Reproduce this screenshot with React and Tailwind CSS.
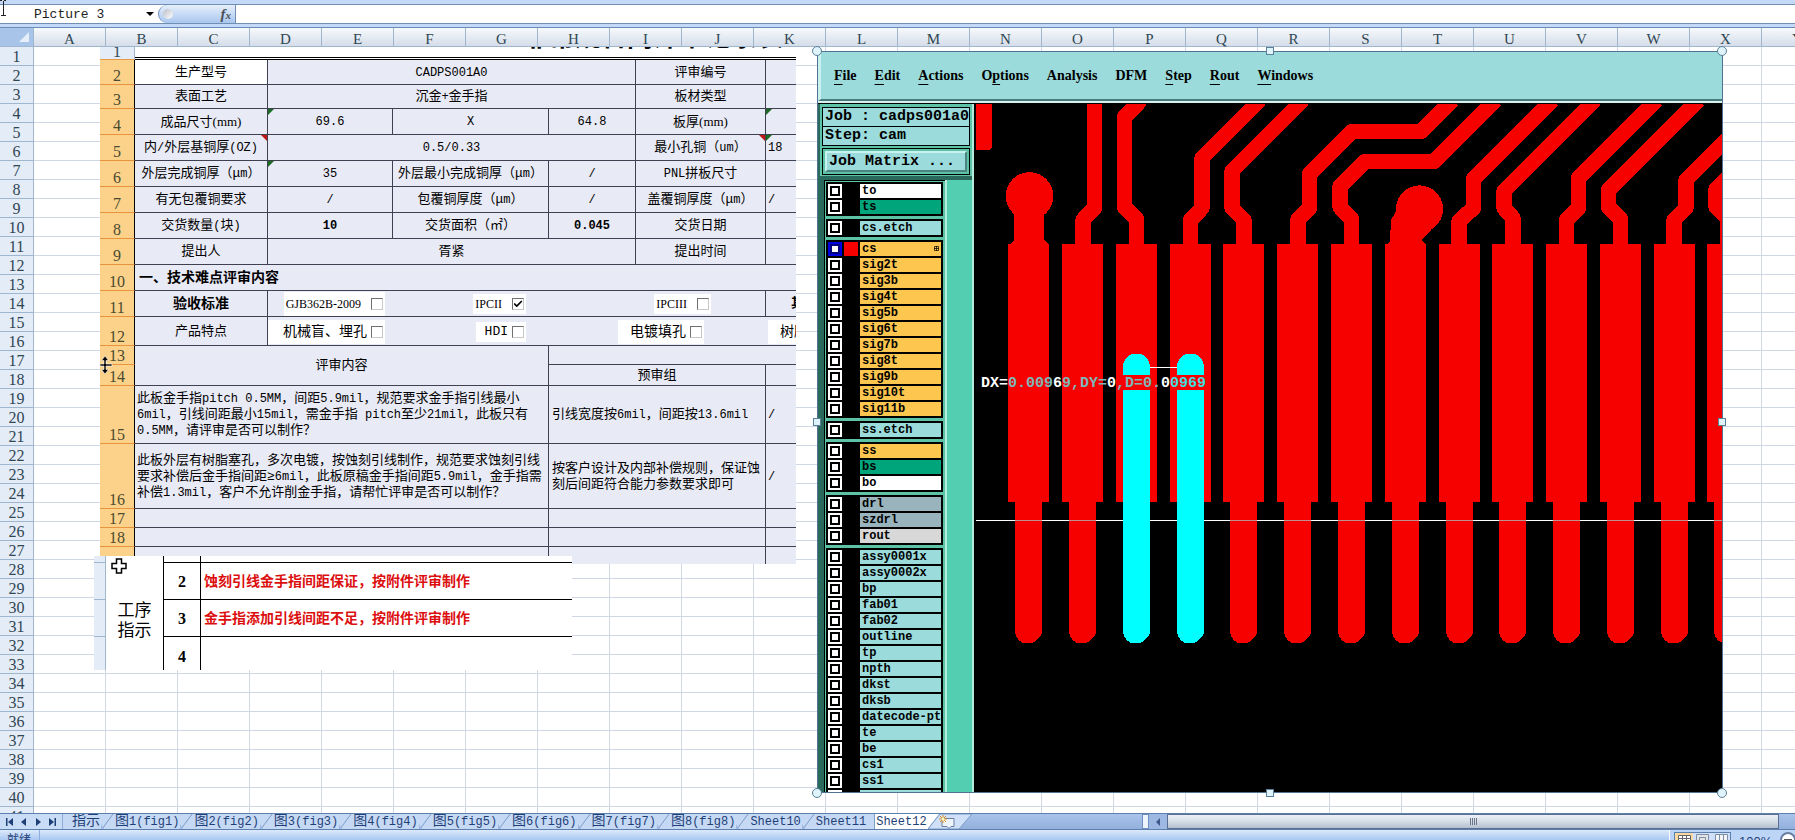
import { useState } from "react";
import clsx from "clsx";
import { Check } from "lucide-react";

const COLUMNS = "ABCDEFGHIJKLMNOPQRSTUVWXYZ".split("");
const ROWS = Array.from({ length: 41 }, (_, i) => i + 1);
const SHEETS = [
  "指示", "图1(fig1)", "图2(fig2)", "图3(fig3)", "图4(fig4)", "图5(fig5)",
  "图6(fig6)", "图7(fig7)", "图8(fig8)", "Sheet10", "Sheet11", "Sheet12",
];

const MONO = "font-['Liberation_Mono','Noto_Sans_CJK_SC',monospace]";
const SERIF = "font-['Liberation_Serif','Noto_Sans_CJK_SC',serif]";

// Chinese glyphs keep the parent's size, the Latin runs are set half-width
function Song({ children }) {
  return children.split(/([\x20-\x7e]+)/).map((part, i) =>
    i % 2 ? <span key={i} className="text-[12px]">{part}</span> : part
  );
}

/* ---------- formula bar ---------- */

function FormulaBar() {
  return (
    <div className="relative shrink-0 h-[27px] bg-[#c3d9f7] pt-1">
      <div className="flex h-5 bg-white border-y border-[#6f8fb5]">
        <div className="flex w-[158px] items-center justify-between pl-[34px] pr-1">
          <input
            aria-label="Name box"
            defaultValue="Picture 3"
            className={clsx(MONO, "w-24 pt-0.5 text-[13px] leading-4 text-[#222] outline-none bg-transparent")}
          />
          <button aria-label="Open name list" className="border-x-4 border-t-4 border-x-transparent border-t-black" />
        </div>
        <div className="flex w-[78px] items-center justify-between rounded-l-full border-l border-r border-[#6f8fb5] bg-linear-to-b from-[#e6effb] to-[#a9c6ee] pl-1 pr-1">
          <span className="size-2.5 rounded-full bg-linear-to-br from-[#b9bec6] to-white" />
          <button aria-label="Insert function" className={clsx(SERIF, "text-[15px] leading-4 italic font-bold text-[#4b4f57]")}>
            f<span className="text-[11px]">x</span>
          </button>
        </div>
        <input aria-label="Formula" className="flex-1 outline-none" />
      </div>
      <svg className="absolute left-0 top-0" width="6" height="16" viewBox="0 0 6 16" stroke="#222" fill="none">
        <path d="M0 .5h2M4 .5h2M3.500 1v14M1 15.500h5" />
      </svg>
    </div>
  );
}

/* ---------- sheet grid ---------- */

function SheetGrid() {
  return (
    <table className="border-separate border-spacing-0 border-t border-[#6a8bb8] bg-white">
      <thead>
        <tr>
          <th className="min-w-[34px] h-[19px] p-0 bg-[#a9c4e9] border-r border-b border-[#9eb6ce]">
            <svg className="ml-auto mr-1" width="10" height="10" viewBox="0 0 10 10">
              <path d="M10 0v10H0z" fill="#e6eefa" />
            </svg>
          </th>
          {COLUMNS.map((c) => (
            <th
              key={c}
              className={clsx(
                SERIF,
                "min-w-[72px] h-[19px] p-0 pt-1 text-[15px] leading-[14px] font-normal text-[#2f4653] border-r border-b border-[#9eb6ce] bg-linear-to-b from-[#f7fafc] to-[#d5dde9]"
              )}
            >
              {c}
            </th>
          ))}
        </tr>
      </thead>
      <tbody>
        {ROWS.map((r) => (
          <tr key={r}>
            <th className={clsx(SERIF, "h-[19px] p-0 pt-0.5 text-[16px] leading-4 font-normal text-[#2f4653] bg-[#e4ecf7] border-r border-b border-[#9eb6ce]")}>
              {r}
            </th>
            {COLUMNS.map((c) => (
              <td key={c} className="p-0 border-r border-b border-[#d0d7e5]" />
            ))}
          </tr>
        ))}
      </tbody>
    </table>
  );
}

/* ---------- review form ---------- */

function FormRow({ n, h, children }) {
  return (
    <tr className={h}>
      <th
        className={clsx(
          SERIF,
          "p-0 align-bottom text-[16px] leading-4 font-normal text-[#4a4a30] bg-[#fcd28a] border-r border-r-black border-b border-b-[#e8943c]"
        )}
      >
        {n}
      </th>
      {children}
    </tr>
  );
}

function Cell({ children, span, rows, className, mark }) {
  return (
    <td
      colSpan={span}
      rowSpan={rows}
      className={clsx("relative p-0 pt-px text-center leading-4 whitespace-nowrap border-b border-[#3f4152]", className)}
    >
      {mark === "green" && <i className="absolute left-0 top-0 border-t-6 border-r-6 border-t-[#1b6b22] border-r-transparent" />}
      {mark === "red" && <i className="absolute right-0 top-0 border-t-6 border-l-6 border-t-[#c01818] border-l-transparent" />}
      {typeof children === "string" ? <Song>{children}</Song> : children}
    </td>
  );
}

function Tick({ label, checked, className }) {
  const [on, setOn] = useState(!!checked);
  return (
    <label className={clsx("inline-flex shrink-0 items-center justify-end gap-1 bg-white pr-0.5 leading-4", className)}>
      {label}
      <span className="relative size-3">
        <input
          type="checkbox"
          checked={on}
          onChange={() => setOn(!on)}
          className="block size-3 appearance-none border border-t-[#707070] border-l-[#707070] border-r-[#c8c8c8] border-b-[#c8c8c8] bg-white"
        />
        {on && <Check size={10} strokeWidth={4} className="pointer-events-none absolute left-px top-px" />}
      </span>
    </label>
  );
}

const R = "border-r";

function ReviewForm() {
  return (
    <div className={clsx(MONO, "absolute left-[100px] top-5 w-[696px] h-[517px] overflow-hidden text-[13px] text-black")}>
      <table className="table-fixed w-[726px] border-separate border-spacing-0 bg-[#e8eaf5]">
        <colgroup>
          <col className="w-[35px]" />
          <col className="w-[133px]" />
          <col className="w-[125px]" />
          <col className="w-[156px]" />
          <col className="w-[87px]" />
          <col className="w-[130px]" />
          <col className="w-[60px]" />
        </colgroup>
        <tbody>
          <tr className="h-[13px]">
            <th className={clsx(SERIF, "p-0 bg-[#e4ecf7] border-r border-b border-r-[#9eb6ce] border-b-[#e69b48]")}>
              <div className="flex h-3 flex-col justify-end overflow-hidden text-[16px] leading-[15px] font-normal text-[#2f4653]">1</div>
            </th>
            <td colSpan={6} className="p-0 bg-white border-b-3 border-double border-black">
              <div className="flex h-2.5 flex-col justify-end overflow-hidden pb-1">
                <b className="pl-[388px] text-[26px] leading-7 whitespace-nowrap">非常规合同评审记录表</b>
              </div>
            </td>
          </tr>
          <FormRow n={2} h="h-[25px]">
            <Cell className={clsx(R, "bg-white")}>生产型号</Cell>
            <Cell span={3} className={R}>CADPS001A0</Cell>
            <Cell className={R}>评审编号</Cell>
            <Cell />
          </FormRow>
          <FormRow n={3} h="h-[24px]">
            <Cell className={R}>表面工艺</Cell>
            <Cell span={3} className={R}>沉金+金手指</Cell>
            <Cell className={R}>板材类型</Cell>
            <Cell />
          </FormRow>
          <FormRow n={4} h="h-[26px]">
            <Cell className={R}><>成品尺寸<span className={SERIF}>(mm)</span></></Cell>
            <Cell className={R} mark="green">69.6</Cell>
            <Cell className={R}>X</Cell>
            <Cell className={R}>64.8</Cell>
            <Cell className={R}><>板厚<span className={SERIF}>(mm)</span></></Cell>
            <Cell mark="green" />
          </FormRow>
          <FormRow n={5} h="h-[26px]">
            <Cell className={R} mark="red">内/外层基铜厚(OZ)</Cell>
            <Cell span={3} className={R}>0.5/0.33</Cell>
            <Cell className={R} mark="red">最小孔铜（um）</Cell>
            <Cell className="text-left pl-0.5" mark="green">18</Cell>
          </FormRow>
          <FormRow n={6} h="h-[26px]">
            <Cell className={R}>外层完成铜厚（μm）</Cell>
            <Cell className={R} mark="green">35</Cell>
            <Cell className={R}>外层最小完成铜厚（μm）</Cell>
            <Cell className={R}>/</Cell>
            <Cell className={R}>PNL拼板尺寸</Cell>
            <Cell />
          </FormRow>
          <FormRow n={7} h="h-[26px]">
            <Cell className={R}>有无包覆铜要求</Cell>
            <Cell className={R}>/</Cell>
            <Cell className={R}>包覆铜厚度（μm）</Cell>
            <Cell className={R}>/</Cell>
            <Cell className={R}>盖覆铜厚度（μm）</Cell>
            <Cell className="text-left pl-0.5">/</Cell>
          </FormRow>
          <FormRow n={8} h="h-[26px]">
            <Cell className={R}>交货数量(块)</Cell>
            <Cell className={clsx(R, "font-bold")}>10</Cell>
            <Cell className={R}>交货面积（㎡）</Cell>
            <Cell className={clsx(R, "font-bold")}>0.045</Cell>
            <Cell className={R}>交货日期</Cell>
            <Cell />
          </FormRow>
          <FormRow n={9} h="h-[26px]">
            <Cell className={R}>提出人</Cell>
            <Cell span={3} className={R}>胥紧</Cell>
            <Cell className={R}>提出时间</Cell>
            <Cell />
          </FormRow>
          <FormRow n={10} h="h-[26px]">
            <Cell span={6} className="text-left pl-1 font-bold text-[14px]">一、技术难点评审内容</Cell>
          </FormRow>
          <FormRow n={11} h="h-[26px]">
            <Cell className={clsx(R, "font-bold text-[14px]")}>验收标准</Cell>
            <Cell span={4} className={R}>
              <div className={clsx(SERIF, "flex items-center pl-4 text-[12px]")}>
                <Tick label="GJB362B-2009" className="w-[101px] h-6 gap-2.5" />
                <Tick label="IPCII" className="ml-[88px] w-[53px] h-5 gap-2.5" checked />
                <Tick label="IPCIII" className="ml-[128px] w-[57px] h-5 gap-2.5" />
              </div>
            </Cell>
            <Cell className="text-left pl-[25px] font-bold">其他</Cell>
          </FormRow>
          <FormRow n={12} h="h-[29px]">
            <Cell className={R}>产品特点</Cell>
            <Cell span={5}>
              <div className="flex items-center text-[14px]">
                <Tick label="机械盲、埋孔" className="w-[117px] h-6" />
                <Tick label="HDI" className="ml-[91px] w-[50px] h-5 text-[13px]" />
                <Tick label="电镀填孔" className="ml-[92px] w-[86px] h-6" />
                <Tick label="树脂塞孔" className="ml-16 w-[86px] h-6" />
              </div>
            </Cell>
          </FormRow>
          <FormRow n={13} h="h-[19px]">
            <Cell span={3} rows={2} className={R}>评审内容</Cell>
            <Cell span={3} />
          </FormRow>
          <FormRow n={14} h="h-[21px]">
            <Cell span={2} className={R}>预审组</Cell>
            <Cell />
          </FormRow>
          <FormRow n={15} h="h-[58px]">
            <Cell span={3} className={clsx(R, "text-left pl-0.5")}>
              <>
                <Song>此板金手指pitch 0.5MM，间距5.9mil，规范要求金手指引线最小</Song><br />
                <Song>6mil，引线间距最小15mil，需金手指 pitch至少21mil，此板只有</Song><br />
                <Song>0.5MM，请评审是否可以制作？</Song>
              </>
            </Cell>
            <Cell span={2} className={clsx(R, "text-left pl-[3px]")}>引线宽度按6mil，间距按13.6mil</Cell>
            <Cell className="text-left pl-0.5">/</Cell>
          </FormRow>
          <FormRow n={16} h="h-[65px]">
            <Cell span={3} className={clsx(R, "text-left pl-0.5")}>
              <>
                <Song>此板外层有树脂塞孔，多次电镀，按蚀刻引线制作，规范要求蚀刻引线</Song><br />
                <Song>要求补偿后金手指间距≥6mil，此板原稿金手指间距5.9mil，金手指需</Song><br />
                <Song>补偿1.3mil，客户不允许削金手指，请帮忙评审是否可以制作？</Song>
              </>
            </Cell>
            <Cell span={2} className={clsx(R, "text-left pl-[3px]")}>
              <>按客户设计及内部补偿规则，保证蚀<br />刻后间距符合能力参数要求即可</>
            </Cell>
            <Cell className="text-left pl-0.5">/</Cell>
          </FormRow>
          {["17", "18", ""].map((n) => (
            <FormRow key={n} n={n} h="h-[19px]">
              <Cell span={3} className={R} />
              <Cell span={2} className={R} />
              <Cell />
            </FormRow>
          ))}
        </tbody>
      </table>
      {/* row resize cursor */}
      <svg className="absolute left-0 top-[309px]" width="13" height="18" viewBox="0 0 13 18">
        <path d="M5 0L1.500 4.500H4V8H0v2h4v3.500H1.500L5 18l3.500-4.500H6V10h6V8H6V4.500h2.500z" fill="#000" stroke="#fff" strokeWidth=".6" />
      </svg>
    </div>
  );
}

/* ---------- process note ---------- */

const STEPS = [
  { n: 2, text: "蚀刻引线金手指间距保证，按附件评审制作" },
  { n: 3, text: "金手指添加引线间距不足，按附件评审制作" },
];

function ProcessNote() {
  const num = "w-[37px] p-0 text-center font-bold text-[16px] border-r border-b border-black";
  const side = "w-3 p-0 bg-[#e4ecf7] border-r border-b border-[#9eb6ce]";
  return (
    <div className={clsx(SERIF, "absolute left-[94px] top-[529px] w-[478px] h-[114px] overflow-hidden bg-white")}>
      <table className="table-fixed w-full border-separate border-spacing-0">
        <tbody>
          <tr className="h-[7px]">
            <td className={side} />
            <td rowSpan={4} className="w-[58px] p-0 pt-2 text-center text-[17px] leading-5 border-r border-black">
              工序<br />指示
            </td>
            <td className={num} />
            <td className="p-0 border-b border-black" />
          </tr>
          {STEPS.map((s) => (
            <tr key={s.n} className="h-[37px]">
              <td className={side} />
              <td className={clsx(num, "pt-0.5")}>{s.n}</td>
              <td className="p-0 pl-[3px] text-[14px] font-bold text-[#dc0f0f] border-b border-black">{s.text}</td>
            </tr>
          ))}
          <tr className="h-[40px]">
            <td className={side} />
            <td className={num}>4</td>
            <td className="p-0" />
          </tr>
        </tbody>
      </table>
      <svg className="absolute left-[17px] top-0.5" width="16" height="16" viewBox="0 0 16 16">
        <path d="M5.500 1h5v4.500H15v5h-4.500V15h-5v-4.500H1v-5h4.500z" fill="#fff" stroke="#000" strokeWidth="1.500" />
      </svg>
    </div>
  );
}

/* ---------- CAM window ---------- */

const MENU = [
  ["", "F", "ile"], ["", "E", "dit"], ["", "A", "ctions"], ["O", "p", "tions"], ["Analysis", "", ""],
  ["DFM", "", ""], ["", "S", "tep"], ["", "R", "out"], ["", "W", "indows"],
];

const WHITE = "bg-white";
const GREEN = "bg-[#00a57c]";
const TEAL = "bg-[#9bdbdb]";
const GOLD = "bg-[#fcc64f]";
const STEEL = "bg-[#9ab4bd]";
const GRAY = "bg-[#d8d8d8]";

const LAYERS = [
  [["to", WHITE], ["ts", GREEN]],
  [["cs.etch", TEAL]],
  [
    ["cs", GOLD], ["sig2t", GOLD], ["sig3b", GOLD], ["sig4t", GOLD], ["sig5b", GOLD], ["sig6t", GOLD],
    ["sig7b", GOLD], ["sig8t", GOLD], ["sig9b", GOLD], ["sig10t", GOLD], ["sig11b", GOLD],
  ],
  [["ss.etch", TEAL]],
  [["ss", GOLD], ["bs", GREEN], ["bo", WHITE]],
  [["drl", STEEL], ["szdrl", STEEL], ["rout", GRAY]],
  [
    ["assy0001x", TEAL], ["assy0002x", TEAL], ["bp", TEAL], ["fab01", TEAL], ["fab02", TEAL],
    ["outline", TEAL], ["tp", TEAL], ["npth", TEAL], ["dkst", TEAL], ["dksb", TEAL],
    ["datecode-pth", TEAL], ["te", TEAL], ["be", TEAL], ["cs1", TEAL], ["ss1", TEAL], ["", TEAL],
  ],
];

function LayerRow({ name, color }) {
  const active = name === "cs";
  return (
    <label className="flex h-3.5 gap-0.5">
      <input
        type="checkbox"
        className={clsx(
          "size-3.5 appearance-none bg-white",
          active
            ? "shadow-[inset_0_0_0_2px_#0000e0,inset_0_0_0_4px_#000080]"
            : "shadow-[inset_0_0_0_2px_white,inset_0_0_0_4px_black]"
        )}
      />
      <span className={clsx("w-3.5", active ? "bg-[#f60000]" : "bg-black")} />
      <span className={clsx("relative flex-1 overflow-hidden whitespace-nowrap pl-0.5 text-[12px] leading-[14px] font-bold", color)}>
        {name}
        {active && (
          <svg className="absolute right-0.5 top-1" width="5" height="5" viewBox="0 0 5 5" fill="none" stroke="#000">
            <path d="M.5 .5h4v4h-4zM2.500 0v5M0 2.500h5" strokeWidth=".7" />
          </svg>
        )}
      </span>
    </label>
  );
}

function LayerPanel() {
  return (
    <div className={clsx(MONO, "flex w-[154px] flex-col bg-[#5cc3a6] border-r-2 border-[#b4eadc]")}>
      <div className="ml-0.5 mt-[3px] mr-0.5 border border-black text-[15px] leading-[18px] font-bold">
        <div className="h-[19px] border-b border-black bg-[#9bdbdb] pl-0.5 whitespace-nowrap">Job : cadps001a0</div>
        <div className="h-[18px] bg-[#9bdbdb] pl-0.5">Step: cam</div>
      </div>
      <div className="mx-0.5 mt-0.5 border border-black p-0.5">
        <button className="block h-[21px] w-full border-2 border-t-[#c9f2ee] border-l-[#c9f2ee] border-r-[#4c8482] border-b-[#4c8482] bg-[#9bdbdb] pl-0.5 text-left text-[15px] leading-[17px] font-bold">
          Job Matrix ...
        </button>
      </div>
      <div className="mt-px flex min-h-0 flex-1 border-t-4 border-l-4 border-[#2a6a5c]">
        <div className="flex h-full w-[121px] flex-col gap-[3px] overflow-hidden border-l border-t border-black bg-[#5cc3a6] pl-px pr-0.5 pt-px">
          {LAYERS.map((group, i) => (
            <div key={i} className="flex shrink-0 flex-col gap-0.5 border-2 border-black bg-black">
              {group.map(([name, color]) => <LayerRow key={name} name={name} color={color} />)}
            </div>
          ))}
        </div>
        <div className="flex-1 border-l-2 border-[#b4eadc] bg-[#54ceb0]" />
      </div>
    </div>
  );
}

const PADS = [1008, 1062, 1116, 1170, 1223, 1277, 1331, 1385, 1439, 1492, 1546, 1600, 1654, 1707];
const SELECTED = [1116, 1170];
const TRACES = [
  "1094.5,100 1094.5,208 1083,220 1083,246",
  "1141,100 1124.5,117 1124.5,207 1136.5,219 1136.5,246",
  "1260,100 1202,158 1202,208 1190.5,220 1190.5,246",
  "1303,100 1232,171 1232,208 1244,220 1244,246",
  "1452.5,100 1421,131.5 1352,131.5 1309.5,174 1309.5,208 1298,219 1298,246",
  "1495.5,100 1434,161.5 1365,161.5 1340,186.5 1340,207 1351.5,219 1351.5,246",
  "1553,100 1473.5,179 1473.5,208 1459,221 1459,246",
  "1595,100 1504,191 1504,208 1513,218 1513,246",
  "1657,100 1578.5,178 1578.5,208 1566.5,220 1566.5,246",
  "1699,100 1608.5,190 1608.5,207 1620.5,219 1620.5,246",
  "1727,139 1686,180 1686,208 1674,220 1674,246",
  "1740,165 1716,189 1716,207 1728,219 1728,246",
];

// straight finger that ends in a rounded tip at y = 643
function fingerPath(x, top) {
  return `M${x} ${top}h27V630q0 5-3 8q-5 5-8 5h-6q-4 0-7-4q-3-3-3-9z`;
}

function Board() {
  return (
    <svg
      className="min-w-0 flex-1 bg-black"
      viewBox="974 104 748 688"
      preserveAspectRatio="xMinYMin slice"
      shapeRendering="crispEdges"
    >
      <g fill="#f60000">
        <path d="M976 104h16v43l-3 3h-13z" />
        <circle cx="1029.500" cy="196" r="23.800" />
        <path d="M1014 210h30v30l5 5h-40l5-5z" />
        <circle cx="1419.500" cy="209" r="23.600" />
        <path d="M1397 210l-6 10l-1 21l-4 4h40l-4-5l19-21z" />
        {PADS.map((x) => (
          <g key={x}>
            <rect x={x} y="244" width="41" height="258" />
            {!SELECTED.includes(x) && <path d={fingerPath(x + 7, 502)} />}
          </g>
        ))}
      </g>
      <g fill="none" stroke="#f60000" strokeWidth="15.500" strokeLinejoin="round">
        {TRACES.map((p) => <polyline key={p} points={p} />)}
      </g>
      <path d="M976 520.500h746" stroke="#fff" />
      <path d="M1015 520.500h27M1069 520.500h27M1230 520.500h27M1284 520.500h27M1338 520.500h27M1392 520.500h27M1446 520.500h27M1499 520.500h27M1553 520.500h27M1607 520.500h27M1661 520.500h27M1714 520.500h8" stroke="#c09090" />
      <path d="M1150 367.500h27" stroke="#fff" />
      <g fill="#00ffff">
        {SELECTED.map((x) => (
          <g key={x}>
            <path d={`M${x + 7} 375v-8a13.500 13.500 0 0 1 27 0v8z`} />
            <path d={fingerPath(x + 7, 390)} />
          </g>
        ))}
      </g>
      <text x="981" y="387" className={MONO} fontSize="15" fontWeight="bold" fill="#7cb8b8">
        <tspan fill="#fff">DX=</tspan>0.009<tspan fill="#fff">6</tspan>9,DY=<tspan fill="#fff">0</tspan>,D=0.<tspan fill="#fff">0</tspan>
        <tspan fill="#3fdede">0969</tspan>
      </text>
    </svg>
  );
}

const HANDLES = [
  "-left-[6px] -top-[6px] rounded-full size-[10px]",
  "-right-[5px] -top-[6px] rounded-full size-[10px]",
  "-left-[6px] -bottom-[6px] rounded-full size-[10px]",
  "-right-[5px] -bottom-[6px] rounded-full size-[10px]",
  "left-1/2 -translate-x-1/2 -top-[5px] size-2",
  "left-1/2 -translate-x-1/2 -bottom-[5px] size-2",
  "top-1/2 -translate-y-1/2 -left-[5px] size-2",
  "top-1/2 -translate-y-1/2 -right-[4px] size-2",
];

function CamWindow() {
  return (
    <div className="absolute left-[817px] top-6 w-[906px] h-[742px] border border-[#4f7390] bg-[#2a6a5c]">
      <div className="flex h-full flex-col overflow-hidden">
        <nav className={clsx(SERIF, "flex h-[49px] shrink-0 items-center gap-[18px] border-l-3 border-[#c9f2ee] border-b-2 border-b-[#4c7a7a] bg-[#9bdbdb] pl-[13px] text-[14px] leading-4 font-bold")}>
          {MENU.map(([pre, key, post]) => (
            <button key={pre + key + post}>
              {pre}
              <span className="underline underline-offset-4">{key}</span>
              {post}
            </button>
          ))}
        </nav>
        <div className="h-0.5 shrink-0 bg-[#d4f3ef]" />
        <div className="flex min-h-0 flex-1 border-t border-black pl-0.5">
          <LayerPanel />
          <Board />
        </div>
      </div>
      {HANDLES.map((h) => (
        <i key={h} className={clsx("absolute border border-[#5a7f96] bg-[#dff3fa]", h)} />
      ))}
    </div>
  );
}

/* ---------- tabs and status ---------- */

function NavArrow({ d, label }) {
  return (
    <button aria-label={label}>
      <svg width="8" height="8" viewBox="0 0 8 8" fill="#1f3f77"><path d={d} /></svg>
    </button>
  );
}

function Slash() {
  return (
    <svg className="shrink-0" width="13" height="15" viewBox="0 0 13 15" fill="none">
      <path d="M1 15L12 0" stroke="#7d9cc8" />
      <path d="M0 10l3 5H0z" fill="#9db9e3" />
    </svg>
  );
}

function SheetTabs() {
  const [active, setActive] = useState("Sheet12");
  return (
    <div className="flex h-[17px] shrink-0 border-y border-[#5d7fae] bg-linear-to-b from-[#a9c3ea] to-[#93b0dc]">
      <div className="flex min-w-0 flex-7 overflow-hidden">
        <div className="flex w-[63px] shrink-0 items-center justify-between border-r border-[#8eaede] bg-[#c9dcf6] px-1.5">
          <NavArrow label="First sheet" d="M0 0h1.500v8H0zM7 0v8L2 4z" />
          <NavArrow label="Previous sheet" d="M6 0v8L1 4z" />
          <NavArrow label="Next sheet" d="M2 0v8l5-4z" />
          <NavArrow label="Last sheet" d="M1 0v8l5-4zM6.500 0H8v8H6.500z" />
        </div>
        <div className="flex shrink-0 bg-[#c5d9f5] pl-2">
          {SHEETS.map((s, i) => (
            <div key={s} className="flex">
              <button
                onClick={() => setActive(s)}
                className={clsx(
                  MONO,
                  "h-[15px] px-px text-[14px] leading-[15px] whitespace-nowrap text-[#1f3f77]",
                  s === active && "bg-white px-2"
                )}
              >
                <Song>{s}</Song>
              </button>
              {i < SHEETS.length - 2 && <Slash />}
              {i === SHEETS.length - 2 && <span className="w-2 border-r border-[#7d9cc8]" />}
            </div>
          ))}
        </div>
        <button aria-label="Insert sheet" className="shrink-0">
          <svg width="44" height="15" viewBox="0 0 44 15" fill="none">
            <path d="M0 15L12 0h32L31 15z" fill="#cfe0f8" stroke="#7d9cc8" />
            <path d="M0 0h11L0 14z" fill="#fff" />
            <path d="M14 4.500h12v8h-3l-2 2l-2-2h-5z" fill="#eef4fc" stroke="#6a7ea3" />
            <path d="M15 1v8M11 5h8M12 2l6 6M18 2l-6 6" stroke="#d99225" />
            <circle cx="15" cy="5" r="1.500" fill="#fff6c0" />
          </svg>
        </button>
      </div>
      <div className="flex flex-4 items-stretch">
        <span className="w-[7px] border border-[#6d8fc0] bg-[#eef4fc]" />
        <button aria-label="Scroll left" className="flex w-[18px] items-center justify-center bg-[#9db9e3]">
          <i className="border-y-4 border-r-4 border-y-transparent border-r-[#3d5a8a]" />
        </button>
        <div className="mr-4 flex flex-1 items-center justify-center gap-px border border-[#5a6f92] bg-linear-to-b from-[#eef2f7] via-[#d5dce6] to-[#b3bfd0]">
          {[0, 1, 2, 3].map((i) => <i key={i} className="h-[7px] w-px bg-[#6b7688]" />)}
        </div>
      </div>
    </div>
  );
}

function StatusBar() {
  return (
    <div className="flex h-2.5 shrink-0 items-start overflow-hidden bg-linear-to-b from-[#dce9fb] to-[#a9c8f2]">
      <div className="h-5 w-10 border-r border-[#8eaede] pl-[7px] pt-px text-[12px] leading-4 text-[#1f3f77] font-['Noto_Sans_CJK_SC',sans-serif]">就绪</div>
      <div className="ml-auto flex h-5 w-[126px] items-start border-l border-white bg-[#bcd5f7] pl-1 pt-0.5">
        <svg className="shrink-0" width="57" height="18" viewBox="0 0 57 18" fill="none" stroke="#7d8fa8">
          <rect x=".5" y=".5" width="56" height="17" fill="#cfe0f8" stroke="#5d7fae" />
          <rect x="1" y="1" width="18" height="16" fill="#f9d9a0" stroke="none" />
          <path d="M4.500 3.500h12v10h-12zM4.500 6.500h12M8.500 3.500v10M12.500 3.500v10" fill="#fff" stroke="#666" />
          <path d="M22.500 2.500h12v12h-12zM25.500 5.500h6v9h-6z" fill="#e4e4e4" />
          <path d="M41.500 2.500h12v12h-12zM45.500 2.500v12M49.500 2.500v12" fill="#f4f4f4" />
        </svg>
        <span className="pl-2 pt-0.5 text-[13px] leading-4 text-[#1f3f77] font-['Liberation_Sans',sans-serif]">100%</span>
        <button aria-label="Zoom out" className="ml-2 size-4 shrink-0 rounded-full border-2 border-[#6a7ea3] bg-white px-0.5">
          <span className="block h-0.5 bg-[#555]" />
        </button>
      </div>
    </div>
  );
}

export default function App() {
  return (
    <div className="flex h-screen flex-col overflow-hidden bg-white">
      <FormulaBar />
      <main className="relative min-h-0 flex-1 overflow-hidden">
        <SheetGrid />
        <ReviewForm />
        <ProcessNote />
        <CamWindow />
      </main>
      <SheetTabs />
      <StatusBar />
    </div>
  );
}
